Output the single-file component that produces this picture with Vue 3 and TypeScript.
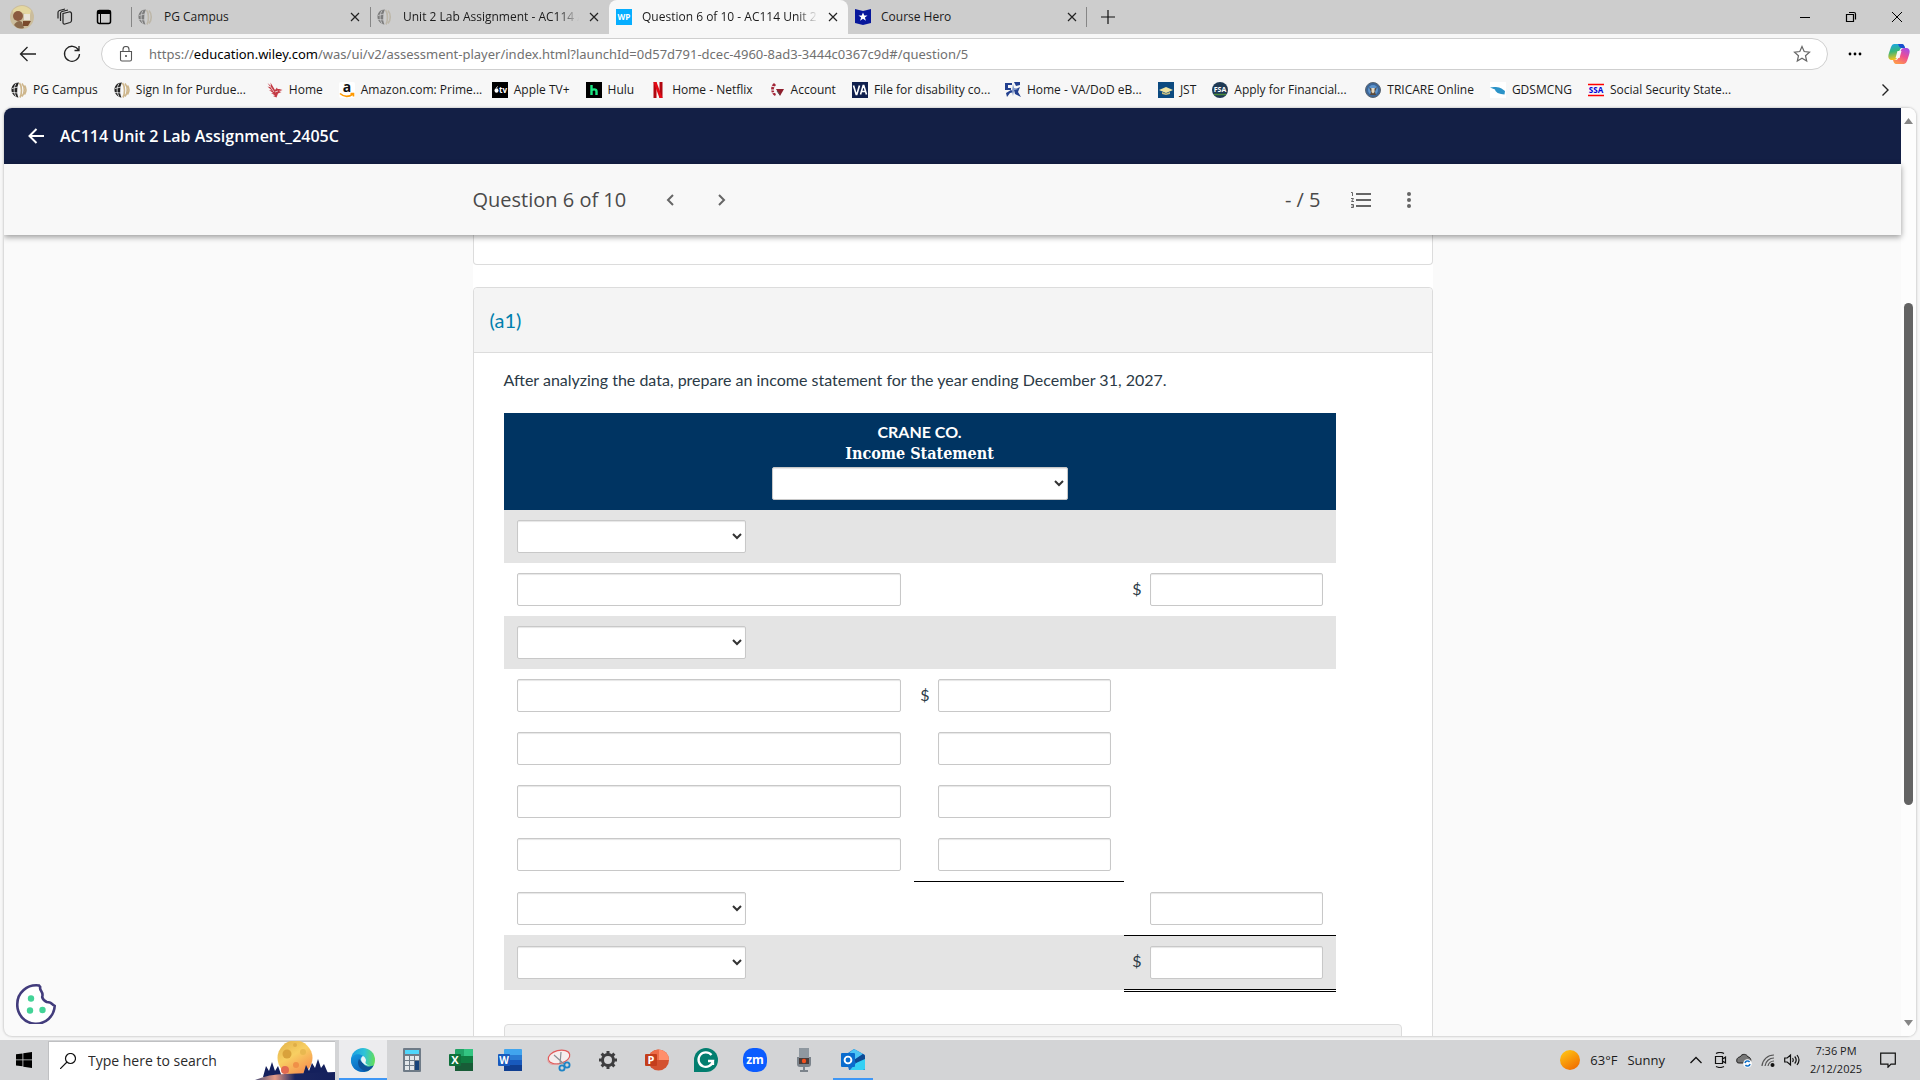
<script setup lang="ts">
import { ref } from 'vue'

interface Tab { title: string; icon: string; active?: boolean; faded?: boolean; edge?: boolean }
interface Bookmark { label: string; icon: string; clipped?: boolean }
interface Glyph { text: string; x: number; y: number; size: number; fill: string }
interface Line {
  shaded?: boolean
  kind: 'select' | 'text'
  inner?: boolean
  outer?: boolean
  dollar?: boolean
  rule?: 'inner' | 'outer' | 'total'
}

const tabs: Tab[] = [
  { title: 'PG Campus', icon: 'globe-dim', edge: true },
  { title: 'Unit 2 Lab Assignment - AC114 Accounting', icon: 'globe-dim', faded: true, edge: true },
  { title: 'Question 6 of 10 - AC114 Unit 2 Lab', icon: 'wp', active: true, faded: true },
  { title: 'Course Hero', icon: 'hero' },
]

const bookmarks: Bookmark[] = [
  { label: 'PG Campus', icon: 'globe' },
  { label: 'Sign In for Purdue...', icon: 'globe', clipped: true },
  { label: 'Home', icon: 'phoenix' },
  { label: 'Amazon.com: Prime...', icon: 'amazon', clipped: true },
  { label: 'Apple TV+', icon: 'atv' },
  { label: 'Hulu', icon: 'hulu' },
  { label: 'Home - Netflix', icon: 'netflix' },
  { label: 'Account', icon: 'account' },
  { label: 'File for disability co...', icon: 'va', clipped: true },
  { label: 'Home - VA/DoD eB...', icon: 'dod', clipped: true },
  { label: 'JST', icon: 'jst' },
  { label: 'Apply for Financial...', icon: 'fsa', clipped: true },
  { label: 'TRICARE Online', icon: 'tricare' },
  { label: 'GDSMCNG', icon: 'gds' },
  { label: 'Social Security State...', icon: 'ssa', clipped: true },
]

// Letters that sit on top of the icon shapes
const glyphs: Record<string, Glyph> = {
  wp: { text: 'WP', x: 8, y: 11, size: 8, fill: '#fff' },
  amazon: { text: 'a', x: 8, y: 10, size: 14, fill: '#111' },
  atv: { text: 'tv', x: 11, y: 11, size: 8, fill: '#fff' },
  fsa: { text: 'FSA', x: 8, y: 10, size: 7, fill: '#fff' },
  ssa: { text: 'SSA', x: 8, y: 11, size: 8, fill: '#0000d8' },
  excel: { text: 'X', x: 6, y: 16, size: 11, fill: '#fff' },
  word: { text: 'W', x: 6, y: 16, size: 10, fill: '#fff' },
  ppt: { text: 'P', x: 6, y: 16, size: 11, fill: '#fff' },
  zoom: { text: 'zm', x: 12, y: 16, size: 12, fill: '#fff' },
}

const lines: Line[] = [
  { kind: 'select', shaded: true },
  { kind: 'text', outer: true, dollar: true },
  { kind: 'select', shaded: true },
  { kind: 'text', inner: true, dollar: true },
  { kind: 'text', inner: true },
  { kind: 'text', inner: true },
  { kind: 'text', inner: true, rule: 'inner' },
  { kind: 'select', outer: true, rule: 'outer' },
  { kind: 'select', shaded: true, outer: true, dollar: true, rule: 'total' },
]

const apps = ['edge', 'calc', 'excel', 'word', 'snip', 'gear', 'ppt', 'grammarly', 'zoom', 'mic', 'outlook']
const tray = ['caret', 'meet', 'cloud', 'wifi', 'sound']
const scroll = { before: 20, thumb: 56 }
const search = ref('')
</script>

<template>
  <div class="screen">
    <svg class="defs" width="0" height="0" aria-hidden="true">
      <defs>
        <linearGradient id="g-sun" x1="0.2" y1="0" x2="0.8" y2="1"><stop offset="0" stop-color="#ffc414" /><stop offset="1" stop-color="#f06a00" /></linearGradient>
        <linearGradient id="g-edge" x1="0" y1="0.3" x2="1" y2="0.4"><stop offset="0" stop-color="#1b9de2" /><stop offset="0.55" stop-color="#2fc3d8" /><stop offset="1" stop-color="#63de58" /></linearGradient>
        <linearGradient id="g-edge2" x1="0" y1="0" x2="0.6" y2="1"><stop offset="0" stop-color="#1698e0" /><stop offset="1" stop-color="#0b5fb8" /></linearGradient>
        <linearGradient id="g-cop1" x1="0" y1="0" x2="0.2" y2="1"><stop offset="0" stop-color="#1aa6f0" /><stop offset="0.5" stop-color="#35b67a" /><stop offset="1" stop-color="#f5c21b" /></linearGradient>
        <linearGradient id="g-cop2" x1="0.8" y1="0" x2="0.3" y2="1"><stop offset="0" stop-color="#a54be8" /><stop offset="0.5" stop-color="#f0508f" /><stop offset="1" stop-color="#ff9a4a" /></linearGradient>
        <linearGradient id="g-moon" x1="0" y1="0" x2="0.6" y2="1"><stop offset="0" stop-color="#e0b04a" /><stop offset="0.5" stop-color="#f8cf62" /><stop offset="1" stop-color="#f79450" /></linearGradient>
        <linearGradient id="g-hill" x1="0" y1="0" x2="1" y2="0"><stop offset="0" stop-color="#4a5078" /><stop offset="0.25" stop-color="#e59a86" /><stop offset="0.5" stop-color="#1a2560" /><stop offset="1" stop-color="#14205c" /></linearGradient>
      </defs>
      <symbol id="globe" viewBox="0 0 16 16">
        <path d="M8 .5C3 .5 .3 4 .5 8.500c.3 3.500 3 6.300 7 7C5.500 12 6 4 8 .5z" fill="#222" />
        <path d="M1 6.500l6-1.500M1 10.500l6 .5M5 1.500c-2.500 4-2.500 9 0 13" stroke="#f7f7f7" stroke-width=".8" fill="none" />
        <path d="M8.500 1c2.500 3 2.500 11 .5 14.500M11 1.500c3 3.500 3 9.500 0 13M13.500 3.500c2 3 2 6 0 9" stroke="#cdb58a" stroke-width="1.600" fill="none" />
      </symbol>
      <symbol id="globe-dim" viewBox="0 0 16 16">
        <path d="M8 .5C3 .5 .3 4 .5 8.500c.3 3.500 3 6.300 7 7C5.500 12 6 4 8 .5z" fill="#7c7c7c" />
        <path d="M1 6.500l6-1.500M1 10.500l6 .5M5 1.500c-2.500 4-2.500 9 0 13" stroke="#cdcdcd" stroke-width=".8" fill="none" />
        <path d="M8.500 1c2.500 3 2.500 11 .5 14.500M11 1.500c3 3.500 3 9.500 0 13" stroke="#bdb7a9" stroke-width="1.600" fill="none" />
      </symbol>
      <symbol id="wp" viewBox="0 0 16 16"><rect width="16" height="16" fill="#06aeff" /></symbol>
      <symbol id="hero" viewBox="0 0 16 16">
        <path d="M0 0l8 2 8-2v14l-8 2-8-2z" fill="#07179b" />
        <path d="M8 3.500l1.300 3h3.200l-2.600 2 1 3.200L8 9.800l-2.900 1.900 1-3.200-2.600-2h3.200z" fill="#fff" />
      </symbol>
      <symbol id="phoenix" viewBox="0 0 16 16">
        <path d="M.5 1l3.500 3L3.500.5 8 8l2-2.500.5 1.500h5l-4 1.200h4l-3.500 1.300 2.500.5-3.500 1.500L9.500 15.500 6 14l2-.5-4-2.500 2.500.2L2 8l2.800.4L.5 4.500l3 .8z" fill="#c43a44" />
        <path d="M3 4l4 6M8 10l3-1" stroke="#f7f7f7" stroke-width=".7" />
      </symbol>
      <symbol id="amazon" viewBox="0 0 16 16">
        <rect width="16" height="16" rx="2" fill="#fff" />
        <path d="M1 11.500c4 3.500 9 3.500 13 .5M11.500 11.500h3v3" stroke="#f90" stroke-width="1.600" fill="none" />
      </symbol>
      <symbol id="atv" viewBox="0 0 16 16">
        <rect width="16" height="16" fill="#000" />
        <ellipse cx="4.500" cy="8.500" rx="2" ry="2.300" fill="#fff" />
        <path d="M4.500 5.800l1-1.300" stroke="#fff" />
      </symbol>
      <symbol id="hulu" viewBox="0 0 16 16">
        <rect width="16" height="16" fill="#000" />
        <path d="M5.500 3v10M5.500 9c0-2 5-2.500 5 .5V13" stroke="#1ce783" stroke-width="2.400" fill="none" />
      </symbol>
      <symbol id="netflix" viewBox="0 0 16 16">
        <path d="M3.500 0h3v16h-3zM9.500 0h3v16h-3z" fill="#b20710" />
        <path d="M3.500 0h3l6 16h-3z" fill="#e50914" />
      </symbol>
      <symbol id="account" viewBox="0 0 16 16">
        <path d="M5 1C1 4 1 11 6 14l1-2C4 10 4 6 7 3z" fill="#a32638" />
        <path d="M7 7h8l-4 7z" fill="#8e1f2d" />
        <path d="M2 4l4 1M2 8l4 0M3 11l4-1" stroke="#f7f7f7" />
        <path d="M8 9l3 4" stroke="#555" />
      </symbol>
      <symbol id="va" viewBox="0 0 16 16">
        <rect width="16" height="16" fill="#10204e" />
        <path d="M1.500 3.500l2.700 9h.6l2.700-9M8.500 12.500l2.700-9h.6l2.700 9M9.500 9.500h4" stroke="#fff" stroke-width="1.600" fill="none" />
      </symbol>
      <symbol id="dod" viewBox="0 0 16 16">
        <path d="M0 1h7v2H3v3h3v2H0zM9 0h6v3l-4 1zM1 11l5-3 3 2-4 1-3 4zM9 8l6-3-2 5 3 5-6-3z" fill="#23408f" />
        <path d="M8 2l1 4 5 1-5 1-1 6-1-5" fill="#7f97c8" />
      </symbol>
      <symbol id="jst" viewBox="0 0 16 16">
        <rect width="16" height="16" fill="#0c4a80" />
        <path d="M1 8l7-3 7 3-7 3z" fill="#efe2a0" /><path d="M4 10v2l4 1 4-1v-2l-4 1.500z" fill="#c8bd7c" />
      </symbol>
      <symbol id="fsa" viewBox="0 0 16 16">
        <circle cx="8" cy="8" r="8" fill="#1f3a55" /><path d="M2 12.500h12" stroke="#4a8b3c" stroke-width="1.500" />
      </symbol>
      <symbol id="tricare" viewBox="0 0 16 16">
        <circle cx="8" cy="8" r="7.500" fill="#3c6698" stroke="#5a6570" /><circle cx="8" cy="8" r="5" fill="#5d94cc" />
        <path d="M4 5l4 3 4-3-2 5 1 3H5l1-3z" fill="#5a4a3c" /><path d="M6.500 6h3v4l-1.500 1.500L6.500 10z" fill="#e8d9c0" />
      </symbol>
      <symbol id="gds" viewBox="0 0 16 16">
        <rect width="16" height="16" fill="#fff" /><path d="M0 5.500l4-.5q5-.5 7.500 1.500L15 9l-.5 3.500-3.500-.5q-4-.5-5.500-3L5 7.500z" fill="#2b93c8" />
      </symbol>
      <symbol id="ssa" viewBox="0 0 16 16"><path d="M0 2.500h16M0 13.500h16" stroke="#f00" stroke-width="1.400" /></symbol>

      <symbol id="edge" viewBox="0 0 24 24">
        <circle cx="12" cy="12" r="12" fill="url(#g-edge)" />
        <path d="M0 12C1 6 8 5 12 8c-4 1-4 8 1 10 3 1.500 7 1 9.500-.5C20 22 16 24 12 24 5 24 0 19 0 12z" fill="url(#g-edge2)" />
        <path d="M8 11c-3 5 1 12 8 12 3-1 5-3 6.500-5.500C19 19.500 14 19 12 15z" fill="#0d5299" />
        <path d="M12 8c-3 2-2 6 0 7 1 1.500 4 3 7 2.500C16 17 14 16 14.500 14 16 12 14 9 12 8z" fill="#e9f3f8" />
      </symbol>
      <symbol id="calc" viewBox="0 0 24 24">
        <rect x="3" width="18" height="24" rx="1" fill="#6f7b87" /><rect x="5" y="2" width="14" height="4" fill="#4fd6fb" />
        <g fill="#e3e7ea"><rect x="5" y="8" width="4" height="4" /><rect x="10" y="8" width="4" height="4" /><rect x="15" y="8" width="4" height="4" /><rect x="5" y="13" width="4" height="4" /><rect x="10" y="13" width="4" height="4" /><rect x="5" y="18" width="4" height="4" /><rect x="10" y="18" width="4" height="4" /></g>
        <rect x="15" y="13" width="4" height="9" fill="#17437a" />
      </symbol>
      <symbol id="excel" viewBox="0 0 24 24">
        <rect x="6" y="1" width="18" height="22" rx="1" fill="#21a366" /><path d="M15 1h9v7h-9z" fill="#33c481" /><path d="M6 15h18v8H6z" fill="#185c37" /><path d="M6 8h9v7H6zM15 8h9v7h-9z" fill="#107c41" />
        <rect y="6" width="12" height="12" rx="1" fill="#0f703b" />
      </symbol>
      <symbol id="word" viewBox="0 0 24 24">
        <rect x="6" y="1" width="18" height="22" rx="1" fill="#41a5ee" /><path d="M6 7h18v5H6z" fill="#2b7cd3" /><path d="M6 12h18v5H6z" fill="#185abd" /><path d="M6 17h18v6H6z" fill="#103f91" />
        <rect y="6" width="12" height="12" rx="1" fill="#185abd" />
      </symbol>
      <symbol id="snip" viewBox="0 0 24 24">
        <ellipse cx="12" cy="9" rx="11" ry="6.500" transform="rotate(-14 12 9)" fill="#f6eeee" stroke="#e25a5a" stroke-width="1.200" />
        <path d="M1 12c0 4 4 5 9 4" stroke="#e29a9a" fill="none" />
        <path d="M7 7l10 9M14 4l-1 12" stroke="#8a9096" stroke-width="1.200" />
        <circle cx="15" cy="20" r="2.600" fill="none" stroke="#1d84c6" stroke-width="1.800" /><circle cx="20" cy="17" r="2.600" fill="none" stroke="#1d84c6" stroke-width="1.800" />
      </symbol>
      <symbol id="gear" viewBox="0 0 24 24">
        <circle cx="12" cy="12" r="5.500" fill="none" stroke="#3d3d3f" stroke-width="3" />
        <g stroke="#3d3d3f" stroke-width="3"><path d="M12 3v3M12 18v3M3 12h3M18 12h3M5.600 5.600l2.200 2.200M16.200 16.200l2.200 2.200M18.400 5.600l-2.200 2.200M7.800 16.200l-2.200 2.200" /></g>
      </symbol>
      <symbol id="ppt" viewBox="0 0 24 24">
        <circle cx="13.500" cy="12" r="10.500" fill="#d35230" /><path d="M13.500 1.500A10.500 10.500 0 0 1 24 12H13.500z" fill="#ff8f6b" /><path d="M13.500 1.500A10.500 10.500 0 0 0 3 12h10.500z" fill="#ed6c47" />
        <rect y="6" width="12" height="12" rx="1" fill="#c43e1c" />
      </symbol>
      <symbol id="grammarly" viewBox="0 0 24 24">
        <path d="M0 24V12A12 12 0 1 1 12 24z" fill="#027e6f" />
        <path d="M17.500 7A7.300 7.300 0 1 0 19 13h-5M19 13v4" stroke="#fff" stroke-width="2.300" fill="none" />
      </symbol>
      <symbol id="zoom" viewBox="0 0 24 24"><rect width="24" height="24" rx="10" fill="#0b5cff" /></symbol>
      <symbol id="mic" viewBox="0 0 24 24">
        <rect x="7" width="10" height="12" fill="#8f98a0" /><path d="M5 9v7q0 3 3 3h8q3 0 3-3V9h-2v7H7V9z" fill="#7b838b" /><rect x="7" y="10" width="10" height="6" fill="#4a3c3a" /><circle cx="12" cy="13" r="2.200" fill="#f4511e" /><path d="M12 19v4M8 23h8" stroke="#7b838b" stroke-width="2" />
      </symbol>
      <symbol id="outlook" viewBox="0 0 24 24">
        <path d="M4 7l9-6 11 6v14q0 1-1 1H8z" fill="#1a6dc8" /><path d="M8 5l5-4 9 5-9 6z" fill="#4cc4f4" /><path d="M24 9v12l-2 1H9l7-8z" fill="#35d0f5" /><path d="M13 12l9-6 2 2v3l-9 4z" fill="#0e4a94" />
        <rect y="5" width="14" height="14" rx="1" fill="#0a6cce" /><circle cx="7" cy="12" r="3.400" fill="none" stroke="#fff" stroke-width="1.900" />
      </symbol>

      <symbol id="caret" viewBox="0 0 16 16"><path d="M2.500 11L8 5.500l5.500 5.500" fill="none" stroke="#111" stroke-width="1.300" /></symbol>
      <symbol id="meet" viewBox="0 0 16 16"><path d="M3.500 4.500h7v7h-7zM10.500 7l3-2v6l-3-2M4 1.500q4-2 8 0M4 14.500q4 2 8 0" fill="none" stroke="#111" stroke-width="1.200" /></symbol>
      <symbol id="cloud" viewBox="0 0 16 16">
        <path d="M1 10c-1-3 1-5 3-5 2-4 7-3 8 0 3 0 4 5 1 6H3q-2 0-2-1z" fill="#777" stroke="#222" /><circle cx="11.500" cy="11.500" r="4.300" fill="#fff" />
        <path d="M9 11a2.600 2.600 0 0 1 4.600-1M14 12a2.600 2.600 0 0 1-4.600 1" stroke="#1673c8" stroke-width="1.600" fill="none" />
      </symbol>
      <symbol id="wifi" viewBox="0 0 16 16"><path d="M2 14A12 12 0 0 1 14 3M5 14a9 9 0 0 1 9-8M8 14a6 6 0 0 1 6-5" fill="none" stroke="#555" stroke-width="1.200" /><circle cx="12.500" cy="13" r="2" fill="#111" /></symbol>
      <symbol id="sound" viewBox="0 0 16 16"><path d="M.7 6h2.500L6.500 3v10L3.200 10H.7zM8.500 6q1.500 2 0 4M10.700 4.500q3 3.500 0 7M13 3q4 5 0 10" fill="none" stroke="#111" stroke-width="1.200" /></symbol>
    </svg>

    <header class="tabstrip">
      <div class="tools">
        <svg class="avatar" viewBox="0 0 24 24"><circle cx="12" cy="12" r="12" fill="#cbbd9c" /><path d="M3 5q9-8 18 0l-1 5-8-2-8 4z" fill="#e4d7a0" /><circle cx="8" cy="11" r="5" fill="#8b5a3f" /><path d="M4 20q4-6 8-3l2 6q-6 2-10-3z" fill="#8a6a4c" /><path d="M14 9h6v6h-6z" fill="#e8e3d8" /><path d="M13 16h8l-3 5h-5z" fill="#7a4a2c" /></svg>
        <button class="plain" aria-label="Workspaces"><svg width="18" height="18" viewBox="0 0 18 18"><path d="M7 5.500l6-1.500q2-.5 2.500 1.500v7q0 1.500-1.500 2L9 16q-2 .5-2-1.500zM4.500 13V5.500q0-1.500 1.500-2l6-1.500M2 10.500V4.500q0-1.500 1.500-2L9 1" fill="none" stroke="#222" stroke-width="1.200" /></svg></button>
        <button class="plain" aria-label="Tab actions"><svg width="16" height="16" viewBox="0 0 16 16"><rect x="1.500" y="1.500" width="13" height="13" rx="2" fill="none" stroke="#000" stroke-width="1.500" /><path d="M1 3q0-2 2-2h10q2 0 2 2v2H1z" /><path d="M4.500 5v9" stroke="#000" /></svg></button>
      </div>
      <nav class="tabs">
        <div v-for="t in tabs" :key="t.title" class="tab" :class="{ active: t.active, edge: t.edge }">
          <svg class="fav" viewBox="0 0 16 16">
            <use :href="'#' + t.icon" />
            <text v-if="glyphs[t.icon]" class="glyph" :x="glyphs[t.icon].x" :y="glyphs[t.icon].y" :font-size="glyphs[t.icon].size" :fill="glyphs[t.icon].fill">{{ glyphs[t.icon].text }}</text>
          </svg>
          <span class="tab-title" :class="{ faded: t.faded }">{{ t.title }}</span>
          <button class="plain" aria-label="Close tab"><svg width="10" height="10" viewBox="0 0 10 10"><path d="M1 1l8 8M9 1L1 9" stroke="#222" stroke-width="1.200" /></svg></button>
        </div>
      </nav>
      <button class="plain newtab" aria-label="New tab"><svg width="14" height="14" viewBox="0 0 14 14"><path d="M7 0v14M0 7h14" stroke="#111" stroke-width="1.200" /></svg></button>
      <div class="winctl">
        <button class="plain" aria-label="Minimize"><svg width="12" height="12" viewBox="0 0 12 12"><path d="M1 6.500h10" stroke="#000" /></svg></button>
        <button class="plain" aria-label="Restore"><svg width="12" height="12" viewBox="0 0 12 12"><path d="M1.500 3.500h7v7h-7zM4 1.500h5q1.500 0 1.500 1.500v5.500" fill="none" stroke="#000" stroke-width="1.200" /></svg></button>
        <button class="plain" aria-label="Close"><svg width="12" height="12" viewBox="0 0 12 12"><path d="M1 1l10 10M11 1L1 11" stroke="#000" /></svg></button>
      </div>
    </header>

    <div class="toolbar">
      <button class="plain" aria-label="Back"><svg width="18" height="18" viewBox="0 0 18 18"><path d="M17 9H1.500M8.500 2l-7 7 7 7" fill="none" stroke="#222" stroke-width="1.300" /></svg></button>
      <button class="plain" aria-label="Refresh"><svg width="18" height="18" viewBox="0 0 18 18"><path d="M15.500 5A7.500 7.500 0 1 0 16.500 9M16 1v4.500h-4.500" fill="none" stroke="#222" stroke-width="1.300" /></svg></button>
      <div class="address">
        <svg width="16" height="16" viewBox="0 0 16 16"><path d="M2.500 5.500h11v8q0 1.500-1.500 1.500H4q-1.500 0-1.500-1.500zM5 5.500V3.500q0-3 3-3t3 3v2" fill="none" stroke="#555" stroke-width="1.100" /><circle cx="8" cy="10" r="1" fill="#444" /></svg>
        <span class="url">https://<b>education.wiley.com</b>/was/ui/v2/assessment-player/index.html?launchId=0d57d791-dcec-4960-8ad3-3444c0367c9d#/question/5</span>
        <svg width="18" height="18" viewBox="0 0 18 18"><path d="M9 1.500l2.200 5 5.300.6-4 3.600 1.200 5.300L9 13.300 4.300 16l1.200-5.300-4-3.600 5.300-.6z" fill="none" stroke="#666" stroke-width="1.200" /></svg>
      </div>
      <button class="plain" aria-label="Settings and more"><svg width="14" height="4" viewBox="0 0 14 4"><circle cx="2" cy="2" r="1.400" /><circle cx="7" cy="2" r="1.400" /><circle cx="12" cy="2" r="1.400" /></svg></button>
      <button class="plain" aria-label="Copilot"><svg width="22" height="22" viewBox="0 0 22 22"><path d="M6 1h8q2 0 3 4h-3q-2 0-3 4l-2 6q-1 2-3 2H3q-4-1-2-7l2-6q1-3 3-3z" fill="url(#g-cop1)" /><path d="M16 21H8q-2 0-3-4h3q2 0 3-4l2-6q1-2 3-2h3q4 1 2 7l-2 6q-1 3-3 3z" fill="url(#g-cop2)" /><path d="M10 1h4q2 0 3 4h-4q-2-1-3-4z" fill="#1a4fd0" /><path d="M9.500 8h4l-2 7h-4z" fill="#f7f7f7" /></svg></button>
    </div>

    <nav class="bookmarks">
      <a v-for="b in bookmarks" :key="b.label" href="#" class="bookmark">
        <svg class="fav" viewBox="0 0 16 16">
          <use :href="'#' + b.icon" />
          <text v-if="glyphs[b.icon]" class="glyph" :x="glyphs[b.icon].x" :y="glyphs[b.icon].y" :font-size="glyphs[b.icon].size" :fill="glyphs[b.icon].fill">{{ glyphs[b.icon].text }}</text>
        </svg>
        <span :class="{ clipped: b.clipped }">{{ b.label }}</span>
      </a>
      <button class="plain more" aria-label="More favorites"><svg width="8" height="12" viewBox="0 0 8 12"><path d="M1.500 .5L7 6l-5.500 5.500" fill="none" stroke="#222" stroke-width="1.400" /></svg></button>
    </nav>

    <main class="page">
      <div class="view">
        <div class="topbar">
          <button class="plain" aria-label="Back to assignments"><svg width="16" height="16" viewBox="0 0 16 16"><path d="M16 8H1.500M8.500 1l-7 7 7 7" fill="none" stroke="#fff" stroke-width="2" /></svg></button>
          <h1>AC114 Unit 2 Lab Assignment_2405C</h1>
        </div>
        <div class="subbar">
          <div class="subbar-inner">
            <h2>Question 6 of 10</h2>
            <button class="plain step" aria-label="Previous question"><svg width="8" height="12" viewBox="0 0 8 12"><path d="M7 1L2 6l5 5" fill="none" stroke="#666" stroke-width="2" /></svg></button>
            <button class="plain step" aria-label="Next question"><svg width="8" height="12" viewBox="0 0 8 12"><path d="M1 1l5 5-5 5" fill="none" stroke="#666" stroke-width="2" /></svg></button>
            <span class="score">- / 5</span>
            <button class="plain" aria-label="Question list"><svg width="20" height="16" viewBox="0 0 20 16"><path d="M5 2h15M5 8h15M5 14h15" stroke="#666" stroke-width="2" /><path d="M0 .5h1.500V4M0 6.500h2.500L.5 9.500H3M0 12.500h2.500v3H0M.5 14h2" fill="none" stroke="#666" /></svg></button>
            <button class="plain dots" aria-label="More options"><svg width="4" height="16" viewBox="0 0 4 16"><circle cx="2" cy="2" r="2" fill="#666" /><circle cx="2" cy="8" r="2" fill="#666" /><circle cx="2" cy="14" r="2" fill="#666" /></svg></button>
          </div>
        </div>
        <div class="content">
          <div class="column">
            <section class="card previous"></section>
            <section class="card question">
              <h3>(a1)</h3>
              <div class="body">
                <p>After analyzing the data, prepare an income statement for the year ending December 31, 2027.</p>
                <table>
                  <colgroup><col class="c1"><col class="c2"><col class="c3"></colgroup>
                  <thead>
                    <tr>
                      <th colspan="3">
                        <div>CRANE CO.</div>
                        <div class="serif">Income Statement</div>
                        <select class="period" aria-label="Statement period"><option></option></select>
                      </th>
                    </tr>
                  </thead>
                  <tbody>
                    <tr v-for="(l, i) in lines" :key="i" :class="{ shaded: l.shaded }">
                      <td>
                        <select v-if="l.kind === 'select'" class="heading" :aria-label="'Line ' + (i + 1) + ' heading'"><option></option></select>
                        <input v-else class="account" type="text" :aria-label="'Line ' + (i + 1) + ' account'">
                      </td>
                      <td :class="{ ruled: l.rule === 'inner' }">
                        <label v-if="l.inner" class="amount"><span v-if="l.dollar">$</span><input type="text" :aria-label="'Line ' + (i + 1) + ' amount'"></label>
                      </td>
                      <td :class="{ ruled: l.rule === 'outer', total: l.rule === 'total' }">
                        <label v-if="l.outer" class="amount"><span v-if="l.dollar">$</span><input type="text" :aria-label="'Line ' + (i + 1) + ' total'"></label>
                      </td>
                    </tr>
                  </tbody>
                </table>
                <section class="card next"></section>
              </div>
            </section>
          </div>
        </div>
        <button class="plain cookie" aria-label="Cookie preferences"><svg width="40" height="40" viewBox="0 0 40 40"><path d="M23 1.500C11 0 1.300 9 1.300 20A18.700 18.700 0 0 0 38.700 22l-2-1.500q-2-2.500-6-2.500-4-2-4.500-5 1-3-1-6-1.500-2-1-4z" fill="#fff" stroke="#423c7c" stroke-width="2.600" /><g fill="#43d397"><circle cx="15" cy="14.500" r="3.200" /><circle cx="14" cy="26.500" r="3.200" /><circle cx="26.500" cy="26" r="3.200" /></g></svg></button>
      </div>
      <div class="scrollbar">
        <svg width="9" height="6" viewBox="0 0 9 6"><path d="M0 6L4.500 0 9 6z" fill="#868686" /></svg>
        <div class="track">
          <div :style="{ height: scroll.before + '%' }"></div>
          <div class="thumb" :style="{ height: scroll.thumb + '%' }"></div>
        </div>
        <svg width="9" height="6" viewBox="0 0 9 6"><path d="M0 0L4.500 6 9 0z" fill="#868686" /></svg>
      </div>
    </main>

    <footer class="taskbar">
      <button class="plain start" aria-label="Start"><svg width="16" height="16" viewBox="0 0 16 16"><path d="M0 2.300L6.500 1.400v6H0zM7.300 1.300L16 0v7.400H7.300zM0 8.300h6.500v6L0 13.500zM7.300 8.300H16V16l-8.700-1.300z" /></svg></button>
      <label class="search">
        <svg width="16" height="16" viewBox="0 0 16 16"><circle cx="10.500" cy="5.500" r="5" fill="none" stroke="#111" stroke-width="1.200" /><path d="M7 9l-7 7" stroke="#111" stroke-width="1.200" /></svg>
        <input v-model="search" type="text" placeholder="Type here to search">
        <svg class="moon" width="80" height="39" viewBox="0 0 80 39"><circle cx="40" cy="17" r="17.500" fill="url(#g-moon)" /><circle cx="32" cy="13" r="4.500" fill="#d9a23c" /><circle cx="48" cy="11" r="3" fill="#e8b850" /><circle cx="40" cy="4" r="2" fill="#dfae48" /><circle cx="41" cy="24" r="3" fill="#f09048" /><circle cx="30" cy="29" r="4" fill="#e36a50" /><path d="M8 36l3-11 3 5 3-9 3 9 3-5 4 11zM48 34l3-10 3 6 3-8 3 5 3-9 3 9 3-4 3 7 2 4z" fill="#14205c" /><path d="M0 39q14-6 30-6l50-2v8z" fill="url(#g-hill)" /></svg>
      </label>
      <nav class="apps">
        <button v-for="a in apps" :key="a" class="plain app" :class="{ current: a === 'edge', open: a === 'outlook' }" :aria-label="a">
          <svg width="24" height="24" viewBox="0 0 24 24">
            <use :href="'#' + a" />
            <text v-if="glyphs[a]" class="glyph" :x="glyphs[a].x" :y="glyphs[a].y" :font-size="glyphs[a].size" :fill="glyphs[a].fill">{{ glyphs[a].text }}</text>
          </svg>
        </button>
      </nav>
      <button class="plain weather"><svg width="20" height="20" viewBox="0 0 20 20"><circle cx="10" cy="10" r="10" fill="url(#g-sun)" /></svg><span>63°F</span><span>Sunny</span></button>
      <div class="tray">
        <button v-for="t in tray" :key="t" class="plain" :aria-label="t"><svg width="16" height="16"><use :href="'#' + t" /></svg></button>
      </div>
      <div class="clock"><span>7:36 PM</span><span>2/12/2025</span></div>
      <button class="plain notes" aria-label="Notifications"><svg width="16" height="16" viewBox="0 0 16 16"><path d="M.7 1.200h14.600v11H11l-3 3v-3H.7z" fill="none" stroke="#111" stroke-width="1.200" /></svg></button>
    </footer>
  </div>
</template>

<style>
body { margin: 0; }
</style>

<style scoped>
* { box-sizing: border-box; }
.screen { display: flex; flex-direction: column; height: 100vh; overflow: hidden; background: #f7f7f7; color: #1b1b1b; font: 12px/16px "Open Sans", "Noto Sans", sans-serif; }
.defs { position: absolute; }
svg { display: block; flex: none; }
.plain { display: flex; align-items: center; justify-content: center; padding: 0; border: 0; background: none; color: inherit; font: inherit; flex: none; }
.fav { width: 16px; height: 16px; }
.glyph { font-family: "Open Sans", sans-serif; font-weight: 700; text-anchor: middle; }

.tabstrip { display: flex; align-items: center; height: 34px; background: #cdcdcd; flex: none; }
.tools { display: flex; align-items: center; gap: 22px; width: 131px; padding-left: 10px; flex: none; }
.avatar { width: 24px; height: 24px; }
.tabs { display: flex; height: 34px; flex: 0 1 956px; min-width: 0; }
.tab { display: flex; align-items: center; flex: 1 1 0; min-width: 0; gap: 10px; padding: 0 10px 0 7px; position: relative; }
.tab.edge::before, .tab:last-child::after { content: ""; position: absolute; left: 0; top: 7px; width: 1px; height: 20px; background: #868686; }
.tab:last-child::after { left: auto; right: 0; }
.tab.active { background: #f7f7f7; border-radius: 8px 8px 0 0; }
.tab-title { flex: 1; overflow: hidden; white-space: nowrap; }
.faded { mask-image: linear-gradient(to right, #000 88%, transparent); }
.newtab { width: 42px; }
.winctl { display: flex; margin-left: auto; }
.winctl .plain { width: 46px; height: 34px; }

.toolbar { display: flex; align-items: center; gap: 26px; height: 40px; padding: 0 10px 0 19px; flex: none; }
.address { display: flex; align-items: center; gap: 15px; flex: 1; min-width: 0; height: 32px; margin: 0 -6px; padding: 0 16px; border: 1px solid #cfcfcf; border-radius: 16px; background: #fff; }
.url { flex: 1; overflow: hidden; white-space: nowrap; font: 13px/20px "Noto Sans", "Open Sans", sans-serif; color: #717171; }
.url b { font-weight: 400; color: #000; }

.bookmarks { display: flex; align-items: center; gap: 16px; height: 34px; padding: 0 31px 2px 11px; flex: none; white-space: nowrap; }
.bookmark { display: flex; align-items: center; gap: 6px; color: inherit; text-decoration: none; }
.clipped { width: 115px; }
.more { margin-left: auto; }

.page { display: flex; flex: 1; min-height: 0; margin: 0 4px 4px; border-radius: 8px; overflow: hidden; background: #fafafa; box-shadow: 0 0 2px 1px #d2d2d2; }
.view { display: flex; flex-direction: column; flex: 1; min-width: 0; position: relative; }
.topbar { display: flex; align-items: center; gap: 16px; height: 56px; padding: 0 24px; background: #131f45; color: #fff; flex: none; }
h1 { margin: 0; font-size: 16px; line-height: 24px; font-weight: 600; }
.subbar { display: flex; justify-content: center; height: 71px; background: #f8f8f8; box-shadow: 0 2px 6px rgba(0, 0, 0, .4); z-index: 1; flex: none; }
.subbar-inner { display: flex; align-items: center; width: 960px; color: #4a4a4a; }
h2 { margin: 0 18px 0 0; font-size: 20px; line-height: 28px; font-weight: 400; }
.step { width: 52px; height: 40px; }
.score { margin: 0 30px 0 auto; font-size: 20px; line-height: 28px; }
.dots { width: 48px; margin-left: 14px; }
.content { display: flex; justify-content: center; flex: 1; min-height: 0; overflow: hidden; }
.column { width: 960px; background: #fff; }
.card { border: 1px solid #dcdcdc; border-radius: 4px; background: #fff; }
.previous { height: 30px; margin-bottom: 22px; border-top: 0; border-radius: 0 0 4px 4px; }
h3 { margin: 0; height: 65px; padding: 0 16px; background: #f4f4f4; border-bottom: 1px solid #dcdcdc; border-radius: 4px 4px 0 0; color: #007fad; font: 400 20px/64px Lato, sans-serif; }
.body { padding: 16px 30px 60px; color: #2b3a46; font: 16px/22px Lato, sans-serif; }
p { margin: 0 0 22px; }
table { width: 832px; border-collapse: collapse; table-layout: fixed; }
.c1 { width: 410px; }
.c2 { width: 210px; }
.c3 { width: 212px; }
th { height: 97px; padding: 8px 0 10px; background: #003462; color: #fff; font-weight: 700; vertical-align: bottom; }
.serif { font-family: "DejaVu Serif Condensed", "DejaVu Serif", serif; }
td { height: 53px; padding: 10px 13px; }
.shaded { background: #e4e4e4; }
select, td input { display: block; height: 33px; margin: 0; padding: 0 4px; border: 1px solid #c8c8c8; border-radius: 2px; background: #fff; box-shadow: inset 0 1px 1px rgba(0, 0, 0, .1); font: inherit; color: #333; }
.period { width: 296px; margin: 2px auto 0; }
.heading { width: 229px; }
.account { width: 384px; }
.amount { display: flex; align-items: center; justify-content: flex-end; gap: 8px; margin-left: -8px; }
.amount span { padding-bottom: 2px; }
.amount input { width: 173px; }
.ruled { border-bottom: 1px solid #000; }
.total { border-bottom: 3px double #000; }
.next { height: 80px; margin-top: 32px; background: #f4f4f4; }
.cookie { position: absolute; left: 12px; bottom: 12px; }
.scrollbar { display: flex; flex-direction: column; align-items: center; width: 15px; padding: 10px 0; background: #fdfdfd; flex: none; }
.track { flex: 1; width: 9px; }
.thumb { border-radius: 5px; background: #636363; }

.taskbar { display: flex; align-items: center; height: 40px; padding-right: 5px; background: #d3d4d6; flex: none; color: #1b1b1b; }
.start { width: 48px; height: 40px; }
.search { display: flex; align-items: center; gap: 12px; width: 287px; height: 39px; padding-left: 11px; border: 1px solid #bfc0c2; border-width: 1px 0 0 1px; background: #fff; }
.search input { flex: 1; min-width: 0; padding: 0; border: 0; outline: 0; background: none; font: 14px/20px "Open Sans", sans-serif; }
.search input::placeholder { color: #2a2a2a; opacity: 1; }
.apps { display: flex; gap: 1px; margin-left: 4px; }
.app { width: 48px; height: 40px; }
.current { background: #ececee; border-bottom: 2px solid #3f97f5; padding-top: 2px; }
.open { background: linear-gradient(#3f97f5, #3f97f5) center bottom / 40px 2px no-repeat; }
.weather { gap: 10px; margin-left: auto; font-size: 13px; line-height: 20px; }
.tray { display: flex; gap: 8px; margin-left: 23px; }
.clock { display: flex; flex-direction: column; align-items: center; width: 72px; font-size: 11px; line-height: 18px; }
.notes { width: 31px; height: 40px; margin-right: 12px; }
</style>
